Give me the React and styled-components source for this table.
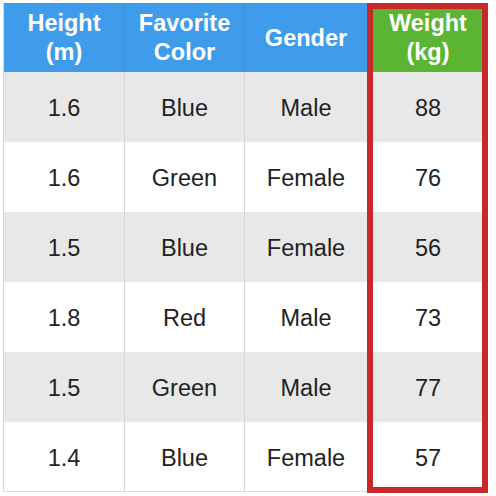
import React from 'react'
import styled, { createGlobalStyle } from 'styled-components'

const GlobalStyle = createGlobalStyle`
    body {
        margin: 0;
        background: #ffffff;
        font-family: "Liberation Sans", Arial, sans-serif;
    }
`

const Page = styled.div`
    padding: 3px 0 0 3px;
    width: 496px;
    height: 496px;
    box-sizing: border-box;
`

const Table = styled.div`
    position: relative;
    display: grid;
    grid-template-columns: 121px 120px 123px 121px;
    grid-template-rows: 69px repeat(6, 70px);
    width: 485px;
`

const HeadCell = styled.div`
    display: flex;
    align-items: center;
    justify-content: center;
    text-align: center;
    background: ${props => props.highlight ? '#5bb532' : '#3f9cea'};
    color: #ffffff;
    font-weight: bold;
    font-size: 23.5px;
    line-height: 29px;
    border-left: 1px solid ${props => props.first ? '#d6d6d6' : '#3a8fd6'};
    padding-top: 1px;
`

const Cell = styled.div`
    display: flex;
    align-items: center;
    justify-content: center;
    padding-top: 3px;
    background: ${props => props.shade ? '#e8e8e8' : '#ffffff'};
    color: #222222;
    font-size: 23.5px;
    border-left: 1px solid #d4d4d4;
    border-bottom: ${props => props.last ? '1px solid #dcdcdc' : 'none'};
`

const Highlight = styled.div`
    position: absolute;
    left: 364px;
    top: 0;
    width: 121px;
    height: 490px;
    border: 6px solid #c7282a;
    box-sizing: border-box;
    pointer-events: none;
`

const rows = [
    ['1.6', 'Blue', 'Male', '88'],
    ['1.6', 'Green', 'Female', '76'],
    ['1.5', 'Blue', 'Female', '56'],
    ['1.8', 'Red', 'Male', '73'],
    ['1.5', 'Green', 'Male', '77'],
    ['1.4', 'Blue', 'Female', '57'],
]

function App () {
    return (
        <Page>
            <GlobalStyle />
            <Table>
                <HeadCell first>Height<br />(m)</HeadCell>
                <HeadCell>Favorite<br />Color</HeadCell>
                <HeadCell>Gender</HeadCell>
                <HeadCell highlight>Weight<br />(kg)</HeadCell>

                {rows.map((row, i) =>
                    row.map((val, j) => (
                        <Cell key={i + '-' + j} shade={i % 2 === 0} last={i === rows.length - 1}>
                            {val}
                        </Cell>
                    ))
                )}

                <Highlight />
            </Table>
        </Page>
    )
}

export default App
